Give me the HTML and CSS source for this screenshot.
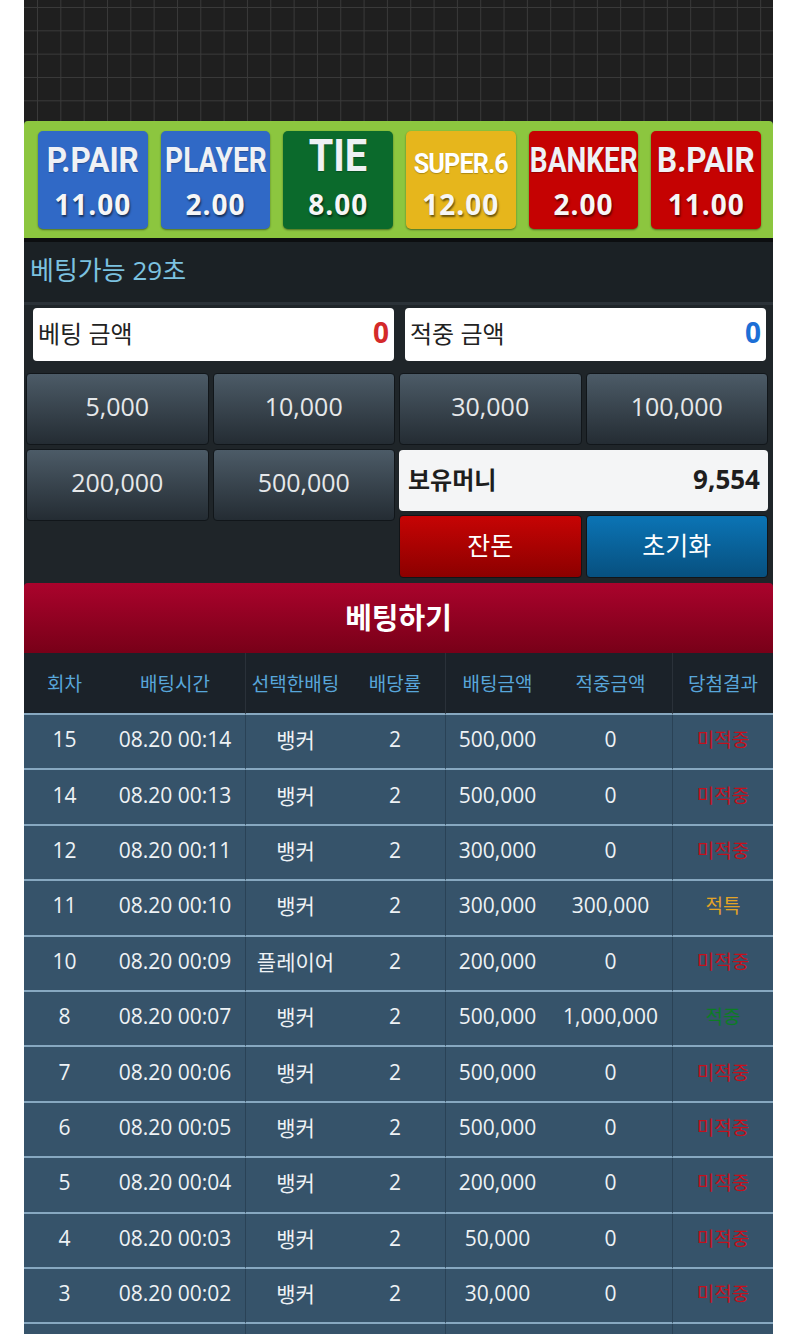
FILE: index.html
```html
<!DOCTYPE html>
<html lang="ko">
<head>
<meta charset="utf-8">
<title>Baccarat</title>
<link rel="stylesheet" href="styles.css">
</head>
<body>
<div class="app">
  <div class="board"></div>

  <div class="bets">
    <div class="bet blue"><div class="bet-name pair">P.PAIR</div><div class="bet-odds">11.00</div></div>
    <div class="bet blue"><div class="bet-name">PLAYER</div><div class="bet-odds">2.00</div></div>
    <div class="bet green"><div class="bet-name big">TIE</div><div class="bet-odds">8.00</div></div>
    <div class="bet yellow"><div class="bet-name small">SUPER.6</div><div class="bet-odds">12.00</div></div>
    <div class="bet red"><div class="bet-name">BANKER</div><div class="bet-odds">2.00</div></div>
    <div class="bet red"><div class="bet-name pair">B.PAIR</div><div class="bet-odds">11.00</div></div>
  </div>

  <div class="status">베팅가능 29초</div>

  <div class="controls">
    <div class="inputs">
      <div class="field"><span class="field-label">베팅 금액</span><span class="field-value red-text">0</span></div>
      <div class="field"><span class="field-label">적중 금액</span><span class="field-value blue-text">0</span></div>
    </div>

    <div class="chip-row">
      <div class="chip">5,000</div>
      <div class="chip">10,000</div>
      <div class="chip">30,000</div>
      <div class="chip">100,000</div>
    </div>

    <div class="lower">
      <div class="chip">200,000</div>
      <div class="chip">500,000</div>
      <div class="side">
        <div class="wallet"><span>보유머니</span><span class="wallet-amount">9,554</span></div>
        <div class="actions">
          <div class="action action-red">잔돈</div>
          <div class="action action-blue">초기화</div>
        </div>
      </div>
    </div>

    <div class="place">베팅하기</div>
  </div>

  <table class="history">
    <colgroup>
      <col class="c1"><col class="c2"><col class="c3"><col class="c4"><col class="c5"><col class="c6"><col class="c7">
    </colgroup>
    <thead>
      <tr><th>회차</th><th>배팅시간</th><th class="sep">선택한배팅</th><th>배당률</th><th class="sep">배팅금액</th><th>적중금액</th><th class="sep">당첨결과</th></tr>
    </thead>
    <tbody>
      <tr><td>15</td><td>08.20 00:14</td><td class="sep">뱅커</td><td>2</td><td class="sep">500,000</td><td>0</td><td class="sep lose">미적중</td></tr>
      <tr><td>14</td><td>08.20 00:13</td><td class="sep">뱅커</td><td>2</td><td class="sep">500,000</td><td>0</td><td class="sep lose">미적중</td></tr>
      <tr><td>12</td><td>08.20 00:11</td><td class="sep">뱅커</td><td>2</td><td class="sep">300,000</td><td>0</td><td class="sep lose">미적중</td></tr>
      <tr><td>11</td><td>08.20 00:10</td><td class="sep">뱅커</td><td>2</td><td class="sep">300,000</td><td>300,000</td><td class="sep tie">적특</td></tr>
      <tr><td>10</td><td>08.20 00:09</td><td class="sep">플레이어</td><td>2</td><td class="sep">200,000</td><td>0</td><td class="sep lose">미적중</td></tr>
      <tr><td>8</td><td>08.20 00:07</td><td class="sep">뱅커</td><td>2</td><td class="sep">500,000</td><td>1,000,000</td><td class="sep win">적중</td></tr>
      <tr><td>7</td><td>08.20 00:06</td><td class="sep">뱅커</td><td>2</td><td class="sep">500,000</td><td>0</td><td class="sep lose">미적중</td></tr>
      <tr><td>6</td><td>08.20 00:05</td><td class="sep">뱅커</td><td>2</td><td class="sep">500,000</td><td>0</td><td class="sep lose">미적중</td></tr>
      <tr><td>5</td><td>08.20 00:04</td><td class="sep">뱅커</td><td>2</td><td class="sep">200,000</td><td>0</td><td class="sep lose">미적중</td></tr>
      <tr><td>4</td><td>08.20 00:03</td><td class="sep">뱅커</td><td>2</td><td class="sep">50,000</td><td>0</td><td class="sep lose">미적중</td></tr>
      <tr><td>3</td><td>08.20 00:02</td><td class="sep">뱅커</td><td>2</td><td class="sep">30,000</td><td>0</td><td class="sep lose">미적중</td></tr>
      <tr class="more"><td></td><td></td><td class="sep"></td><td></td><td class="sep"></td><td></td><td class="sep"></td></tr>
    </tbody>
  </table>
</div>
</body>
</html>
```

FILE: styles.css
```css
* { box-sizing: border-box; }

body {
  margin: 0;
  background: #ffffff;
  font-family: "Open Sans", "Noto Sans CJK KR", sans-serif;
}

.app {
  width: 749px;
  margin-left: 24px;
  background: #1f2529;
}

.board {
  height: 121px;
  background-color: #1f1f1f;
  background-image:
    linear-gradient(to right, #3a3a3a 1px, transparent 1px),
    linear-gradient(to bottom, #3a3a3a 1px, transparent 1px);
  background-size: 23.33px 23.33px;
  background-position: 13px 7px;
}

.bets {
  display: flex;
  gap: 13px;
  padding: 10px 12px 9px 14px;
  background: #8cc63f;
  border-radius: 4px 4px 0 0;
  border-bottom: 4px solid #0c0e10;
}

.bet {
  flex: 1 1 0;
  min-width: 0;
  height: 98px;
  border-radius: 5px;
  box-shadow: 0 1px 2px rgba(0, 0, 0, 0.45);
  display: flex;
  flex-direction: column;
  align-items: center;
  color: #eff1f5;
}

.blue { background: #3069c6; }
.green { background: #0b6a2c; }
.yellow { background: #e6b61c; color: #ffffff; }
.red { background: #c50202; }

.bet-name {
  height: 47px;
  width: 100%;
  display: flex;
  align-items: flex-end;
  justify-content: center;
  font-family: Roboto, sans-serif;
  font-weight: 700;
  font-size: 35px;
  line-height: 1;
  white-space: nowrap;
  transform: scaleX(0.8);
  text-shadow: 0 1px 1px rgba(0, 0, 0, 0.25);
}

.bet-name.pair { transform: scaleX(0.9); }
.bet-name.big { font-size: 44px; transform: scaleX(0.9); }
.bet-name.small { font-size: 28px; letter-spacing: -1px; transform: scaleX(0.9); }

.bet-odds {
  margin-top: 12px;
  font-family: "Open Sans", sans-serif;
  font-weight: 700;
  font-size: 28px;
  line-height: 1;
  letter-spacing: 1px;
  color: #f6f6f6;
  text-shadow: 1px 2px 2px rgba(0, 0, 0, 0.55);
}

.status {
  height: 63px;
  padding: 0 0 6px 6px;
  display: flex;
  align-items: center;
  background: #1b2125;
  color: #7cc2e0;
  font-size: 26px;
  border-bottom: 3px solid #2b3238;
}

.controls {
  padding-top: 3px;
}

.inputs {
  display: flex;
  gap: 11px;
  padding: 0 7px 0 9px;
}

.field {
  flex: 1;
  height: 53px;
  background: #ffffff;
  border-radius: 4px;
  display: flex;
  align-items: center;
  justify-content: space-between;
  padding: 0 5px 5px;
}

.field-label {
  font-size: 24px;
  color: #222222;
}

.field-value {
  font-weight: 700;
  font-size: 28px;
}

.red-text { color: #d42a2a; }
.blue-text { color: #1c6fd6; }

.chip-row,
.lower {
  display: grid;
  grid-template-columns: repeat(4, 1fr);
  gap: 4px;
  padding: 0 5px 0 2px;
}

.chip-row { margin-top: 12px; }
.lower { margin-top: 4px; align-items: start; }

.chip {
  height: 72px;
  padding-bottom: 6px;
  border: 1px solid #11161a;
  border-radius: 4px;
  background: linear-gradient(to bottom, #4c5b67, #242c33);
  color: #e6e8ea;
  font-size: 25px;
  display: flex;
  align-items: center;
  justify-content: center;
}

.side {
  grid-column: 3 / span 2;
  display: flex;
  flex-direction: column;
  gap: 4px;
}

.wallet {
  margin-top: 1px;
  height: 61px;
  background: #f4f5f6;
  border-radius: 4px;
  padding: 0 8px 4px 9px;
  display: flex;
  align-items: center;
  justify-content: space-between;
  font-weight: 700;
  font-size: 24px;
  color: #1e1e1e;
}

.wallet-amount { font-size: 26px; }

.actions {
  display: grid;
  grid-template-columns: 1fr 1fr;
  gap: 4px;
}

.action {
  height: 63px;
  padding-bottom: 6px;
  border: 1px solid #121518;
  border-radius: 4px;
  display: flex;
  align-items: center;
  justify-content: center;
  color: #ffffff;
  font-size: 25px;
}

.action-red { background: linear-gradient(to bottom, #c60404, #8c0000); }
.action-blue { background: linear-gradient(to bottom, #0b74b5, #07507f); }

.place {
  margin-top: 5px;
  height: 70px;
  padding-bottom: 4px;
  border-radius: 4px 4px 0 0;
  background: linear-gradient(to bottom, #aa032c, #780018);
  color: #ffffff;
  font-weight: 700;
  font-size: 29px;
  display: flex;
  align-items: center;
  justify-content: center;
}

.history {
  width: 100%;
  table-layout: fixed;
  border-collapse: separate;
  border-spacing: 0;
}

.c1 { width: 81px; }
.c2 { width: 140px; }
.c3 { width: 100px; }
.c4 { width: 100px; }
.c5 { width: 104px; }
.c6 { width: 123px; }
.c7 { width: 101px; }

.history th {
  height: 62px;
  padding: 0;
  background: #1b2229;
  color: #58a6da;
  font-weight: 400;
  font-size: 19px;
  white-space: nowrap;
  border-bottom: 2px solid #87a8c0;
}

.history th.sep { border-left: 1px solid #2a3139; }

.history td {
  height: 55.4px;
  padding: 0 0 5px;
  background: #36536a;
  color: #eef2f5;
  font-size: 21px;
  text-align: center;
  white-space: nowrap;
  border-bottom: 2px solid #87a8c0;
}

.history td.sep { border-left: 1px solid #2a4256; }

.history td.lose { color: #c4101c; font-size: 19px; }
.history td.tie { color: #e3a426; font-size: 19px; }
.history td.win { color: #0c7d24; font-size: 19px; }
```
